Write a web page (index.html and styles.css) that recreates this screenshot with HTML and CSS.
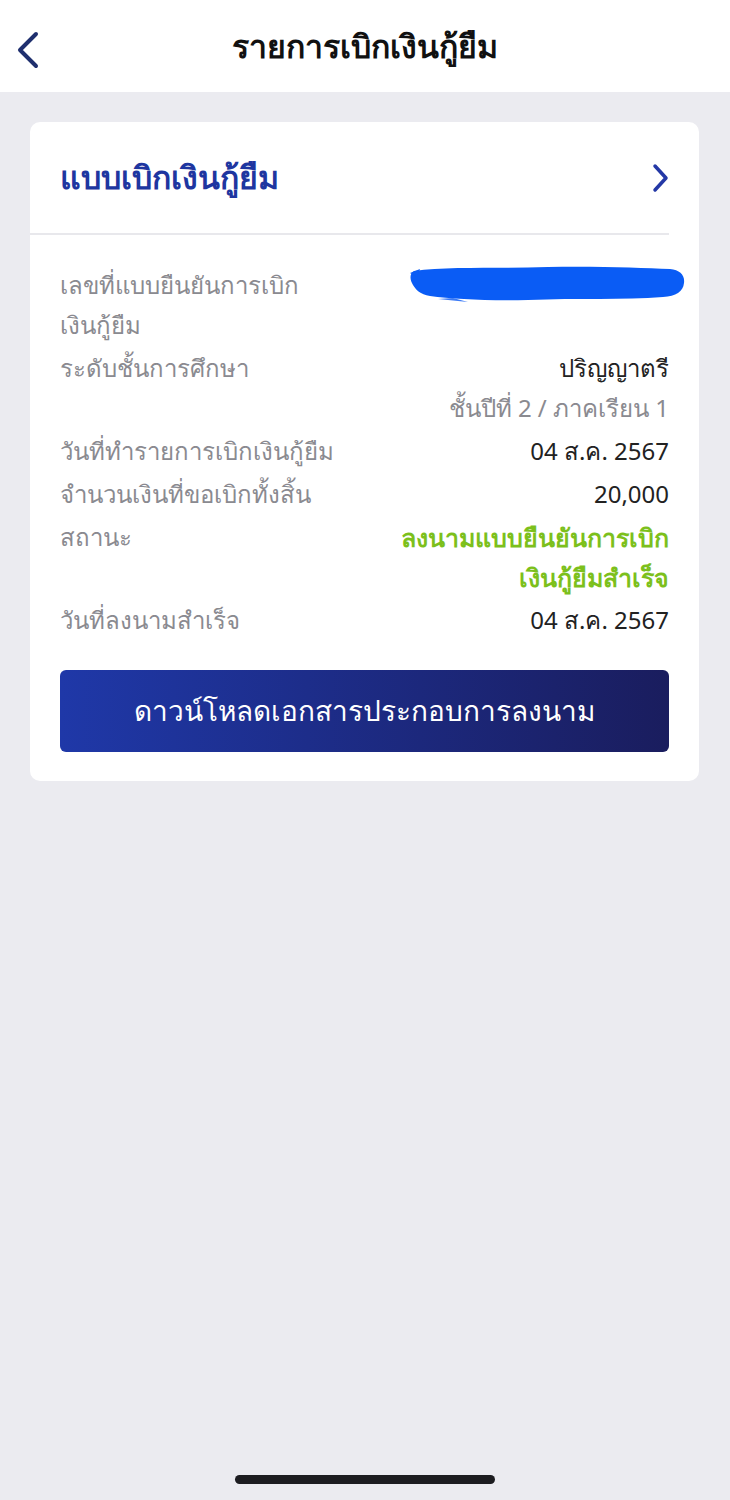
FILE: index.html
```html
<!DOCTYPE html>
<html lang="th">
<head>
    <meta charset="UTF-8">
    <meta name="viewport" content="width=device-width, initial-scale=1.0">
    <title>รายการเบิกเงินกู้ยืม</title>
    <link rel="stylesheet" href="styles.css">
</head>
<body>
    <div class="header">
        <button class="back-btn" aria-label="back">
            <svg width="26" height="40" viewBox="0 0 26 40">
                <path d="M22 4 L6 20 L22 36" fill="none" stroke="#1f2f6e" stroke-width="4" stroke-linecap="round" stroke-linejoin="round"/>
            </svg>
        </button>
        <div class="header-title">รายการเบิกเงินกู้ยืม</div>
    </div>

    <div class="main-content">
        <div class="card">
            <div class="card-head">
                <h2>แบบเบิกเงินกู้ยืม</h2>
                <svg width="18" height="30" viewBox="0 0 18 30">
                    <path d="M3 3 L14 15 L3 27" fill="none" stroke="#2438a6" stroke-width="3.5" stroke-linecap="round" stroke-linejoin="round"/>
                </svg>
            </div>
            <div class="divider"></div>

            <div class="rows">
                <div class="row">
                    <div class="label">เลขที่แบบยืนยันการเบิก<br>เงินกู้ยืม</div>
                    <!-- redacted value -->
                    <svg class="redacted" width="278" height="42" viewBox="0 0 278 42">
                        <path d="M6 8 C40 3 90 6 140 4 C190 3 235 5 262 6 C272 7 277 12 276 20 C275 29 268 33 255 34 C215 37 170 35 120 37 C80 38 45 36 22 33 C12 31 8 27 5 22 C2 17 1 11 6 8 Z" fill="#0a5cf5"/>
                        <path d="M2 10 L12 6 L9 14 Z" fill="#0a5cf5"/>
                        <path d="M30 36 L60 39 L45 35 Z" fill="#3b7af6"/>
                    </svg>
                </div>
                <div class="row">
                    <div class="label">ระดับชั้นการศึกษา</div>
                    <div class="value">
                        <div class="value-main">ปริญญาตรี</div>
                        <div class="value-sub">ชั้นปีที่ 2 / ภาคเรียน 1</div>
                    </div>
                </div>
                <div class="row">
                    <div class="label">วันที่ทำรายการเบิกเงินกู้ยืม</div>
                    <div class="value">04 ส.ค. 2567</div>
                </div>
                <div class="row">
                    <div class="label">จำนวนเงินที่ขอเบิกทั้งสิ้น</div>
                    <div class="value">20,000</div>
                </div>
                <div class="row">
                    <div class="label">สถานะ</div>
                    <div class="value status">ลงนามแบบยืนยันการเบิก<br>เงินกู้ยืมสำเร็จ</div>
                </div>
                <div class="row">
                    <div class="label">วันที่ลงนามสำเร็จ</div>
                    <div class="value">04 ส.ค. 2567</div>
                </div>
            </div>

            <button class="download-btn">ดาวน์โหลดเอกสารประกอบการลงนาม</button>
        </div>
    </div>

    <div class="home-bar"></div>
</body>
</html>
```

FILE: styles.css
```css
body {
    font-family: "Noto Sans", "DejaVu Sans", sans-serif;
    margin: 0;
    padding: 0;
    box-sizing: border-box;
    background-color: #ebebf0;
    height: 1500px;
    display: flex;
    flex-direction: column;
}
.header {
    background-color: white;
    height: 92px;
    display: flex;
    align-items: center;
    justify-content: center;
    position: relative;
}
.back-btn {
    position: absolute;
    left: 14px;
    top: 30px;
    background: none;
    border: none;
    padding: 0;
}
.header-title {
    font-size: 32px;
    font-weight: 600;
    color: #111;
}
.main-content {
    flex: 1;
    padding: 30px 31px 0 30px;
}
.card {
    background: white;
    border-radius: 10px;
    padding-bottom: 29px;
}
.card-head {
    height: 111px;
    display: flex;
    align-items: center;
    justify-content: space-between;
    padding: 0 29px 0 30px;
}
.card-head h2 {
    margin: 0;
    font-size: 32px;
    font-weight: 800;
    color: #1e36a0;
}
.divider {
    height: 2px;
    background-color: #e8e8ec;
    margin-right: 30px;
}
.rows {
    padding: 30px 30px 0 30px;
    display: flex;
    flex-direction: column;
    gap: 3px;
}
.row {
    display: flex;
    justify-content: space-between;
    align-items: flex-start;
    font-size: 24px;
    line-height: 40px;
}
.label {
    color: #8a8a90;
}
.value {
    color: #222;
    text-align: right;
}
.value-sub {
    color: #8a8a90;
}
.value.status {
    color: #7cc01c;
    font-weight: bold;
    font-size: 25px;
}
.redacted {
    margin: -2px -17px 0 0;
}
.download-btn {
    display: block;
    width: calc(100% - 60px);
    height: 82px;
    margin: 30px 30px 0 30px;
    border: none;
    border-radius: 6px;
    background: linear-gradient(90deg, #1f38a8, #1a1d5e);
    color: white;
    font-family: inherit;
    font-size: 28px;
    font-weight: 500;
}
.home-bar {
    width: 260px;
    height: 9px;
    border-radius: 5px;
    background-color: #1c1c20;
    margin: 0 auto 16px auto;
}
```
